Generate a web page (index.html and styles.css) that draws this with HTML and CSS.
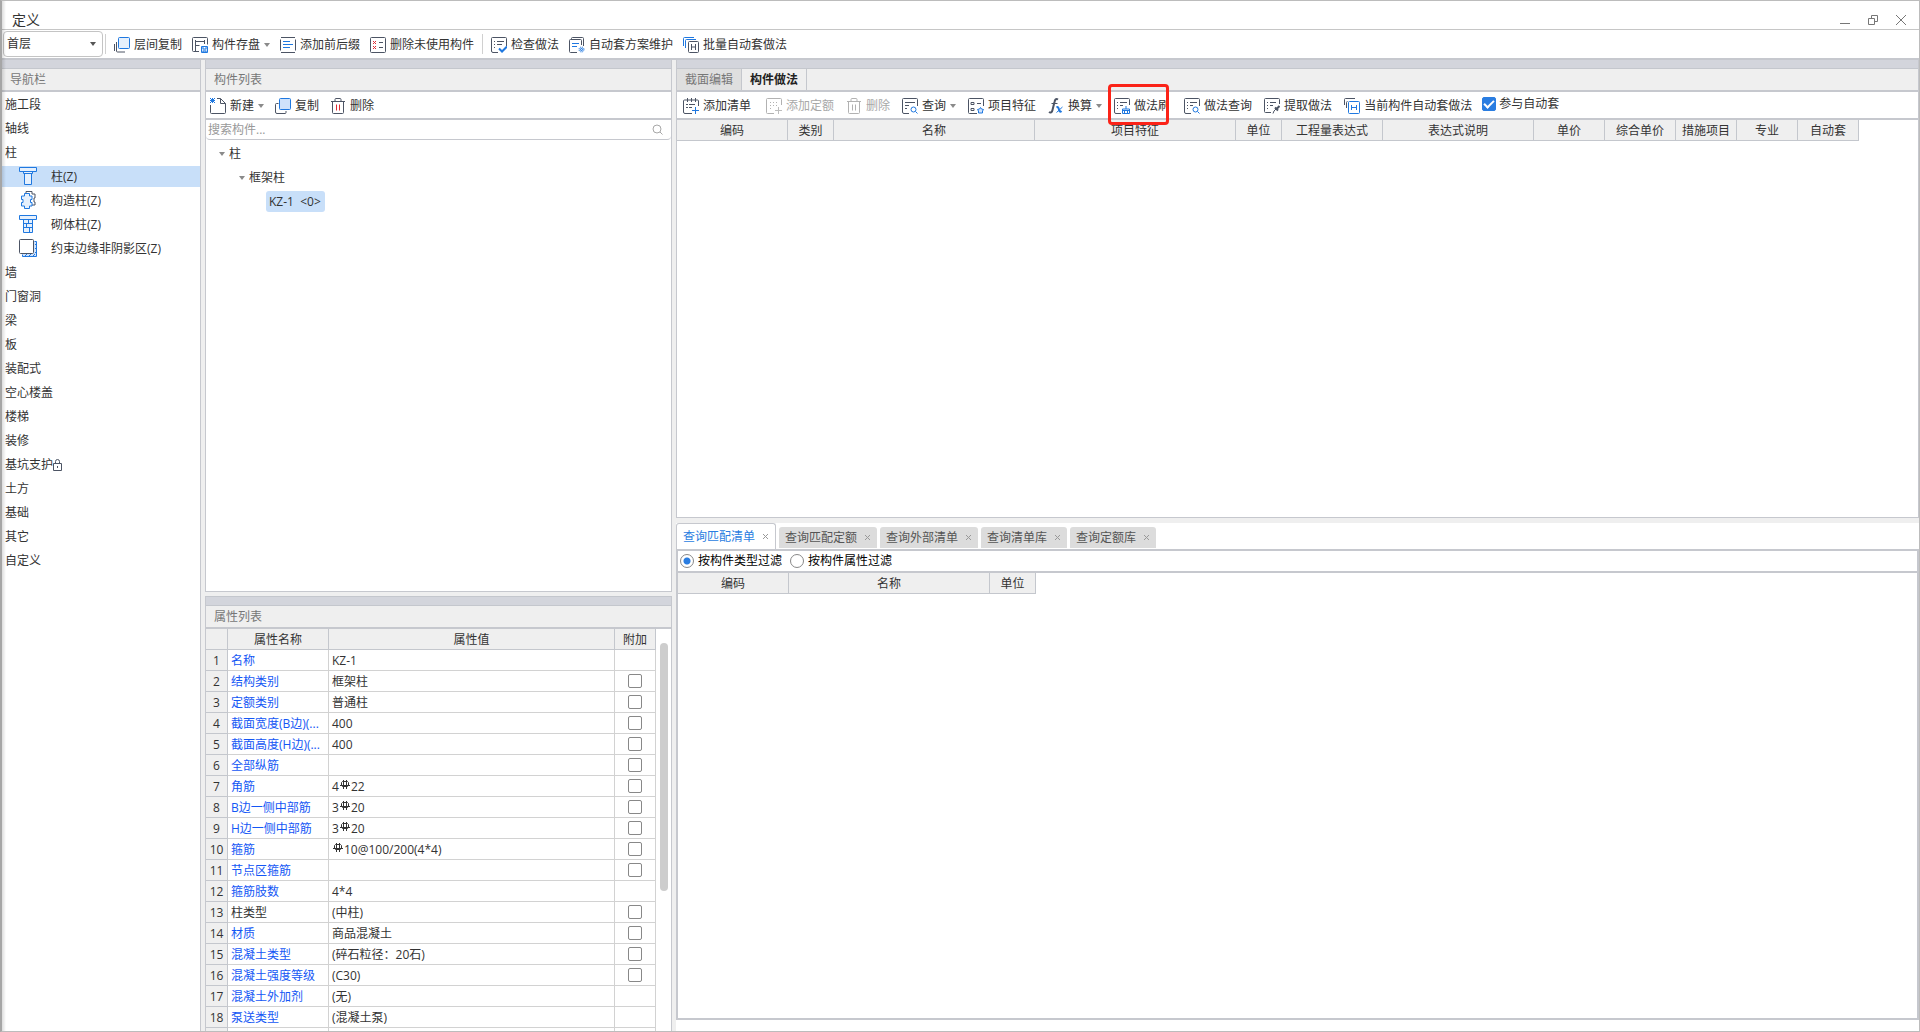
FILE: index.html
```html
<!DOCTYPE html>
<html lang="zh-CN">
<head>
<meta charset="utf-8">
<title>定义</title>
<link rel="stylesheet" href="styles.css">
</head>
<body>
<svg class="defs" aria-hidden="true">
  <symbol id="i-copy" viewBox="0 0 16 16"><path class="d" d="M3.500 5.500H1.500a1 1 0 0 0-1 1V14a1.500 1.500 0 0 0 1.500 1.500H10a1 1 0 0 0 1-1V13"/><rect class="b f" x="4.500" y=".5" width="11" height="11" rx="1"/></symbol>
  <symbol id="i-layers" viewBox="0 0 16 16"><path class="d" d="M.5 7v7M2.500 5v9a1 1 0 0 0 1 1H11"/><rect class="b f2" x="4.500" y=".5" width="11" height="11" rx="1"/></symbol>
  <symbol id="i-save" viewBox="0 0 16 16"><path class="d" d="M7 14.500H1.500a1 1 0 0 1-1-1v-12a1 1 0 0 1 1-1h13a1 1 0 0 1 1 1v6M3.500 3v11.500M3.500 4.500h9M12.500 3v4M3.500 8.500h4"/><path class="b f" d="M9.500 9.500h6v6h-6zM11 9.500v2.500h3V9.500M11 15.500V14h3v1.500"/></symbol>
  <symbol id="i-affix" viewBox="0 0 16 16"><path class="d" d="M.5 2.500v11M15.500 2.500v11"/><path class="d" d="M1 .5h14M1 15.500h14"/><path class="b" d="M3 4.500h7M3 7.500h10M3 10.500h7"/></symbol>
  <symbol id="i-unused" viewBox="0 0 16 16"><rect class="d" x=".5" y=".5" width="15" height="15" rx="1"/><path class="r" d="M3 4l3 3M6 4l-3 3M3 9l3 3M6 9l-3 3"/><path class="d" d="M9 5.500h4M9 10.500h4"/></symbol>
  <symbol id="i-check" viewBox="0 0 16 16"><path class="d" d="M15.500 9V1.500a1 1 0 0 0-1-1h-13a1 1 0 0 0-1 1v12.500a1.500 1.500 0 0 0 1.500 1.500H7M3 4.500h1M6 4.500h7M3 7.500h1M6 7.500h5M3 10.500h1"/><path class="b w" d="M8 11.500l3 3 5-5"/></symbol>
  <symbol id="i-plan" viewBox="0 0 16 16"><path class="d" d="M2.500 2.500v-1a1 1 0 0 1 1-1h10a1 1 0 0 1 1 1V9M8 15.500H1.500a1 1 0 0 1-1-1v-11a1 1 0 0 1 1-1h10a1 1 0 0 1 1 1V8"/><path class="b" d="M3 6.500h7M3 9.500h5"/><circle class="b f" cx="12.500" cy="12.500" r="2.500" stroke-dasharray="1 1"/><circle class="b" cx="12.500" cy="12.500" r="1"/></symbol>
  <symbol id="i-batch" viewBox="0 0 16 16"><path class="b" d="M.5 9V1.500a1 1 0 0 1 1-1H11M2.500 11V3.500a1 1 0 0 1 1-1H13"/><rect class="d" x="5.500" y="4.500" width="10" height="11" rx="1"/><path class="d" d="M8.500 7v6M12.500 7v6M8.500 10h4"/></symbol>
  <symbol id="i-current" viewBox="0 0 16 16"><path class="d" d="M.5 7V1.500a1 1 0 0 1 1-1H11M2.500 10V4.500a1 1 0 0 1 1-1"/><rect class="b" x="4.500" y="3.500" width="11" height="12" rx="1"/><path class="b" d="M7.500 7v5M12.500 7v5M7.500 9.500h5"/></symbol>
  <symbol id="i-new" viewBox="0 0 16 16"><path class="d" d="M.5 7v7.500a1 1 0 0 0 1 1h13a1 1 0 0 0 1-1V5.500L10.500.5H7M10.500.5v5h5"/><path class="b" d="M0 0l5 5M5 0L0 5M2.500 0v5M0 2.500h5"/></symbol>
  <symbol id="i-trash" viewBox="0 0 16 16"><path class="d" d="M1 3.500h14M5 3V1.500a1 1 0 0 1 1-1h4a1 1 0 0 1 1 1V3M2.500 3.500v11a1 1 0 0 0 1 1h9a1 1 0 0 0 1-1v-11"/><path class="r" d="M6.500 6.500v6M9.500 6.500v6"/></symbol>
  <symbol id="i-addlist" viewBox="0 0 16 16"><path class="d" d="M9 15.500H2A1.500 1.500 0 0 1 .5 14V3a1 1 0 0 1 1-1h13a1 1 0 0 1 1 1v5M4.500 0v4M8.500 0v4M12.500 0v4M3 6.500h2M6 6.500h6M3 9.500h2M6 9.500h3"/><path class="b" d="M9 12.500h7M12.500 9v7"/></symbol>
  <symbol id="i-addquota" viewBox="0 0 16 16"><path class="d" d="M8 15.500H1.500a1 1 0 0 1-1-1v-13a1 1 0 0 1 1-1h13a1 1 0 0 1 1 1V7M4 4.500h1M7 4.500h1M10 4.500h1M4 7.500h1M7 7.500h1M10 7.500h1M4 10.500h1"/><path class="b" d="M9 12.500h7M12.500 9v7"/></symbol>
  <symbol id="i-query" viewBox="0 0 16 16"><path class="d" d="M7 15.500H2A1.500 1.500 0 0 1 .5 14V1.500a1 1 0 0 1 1-1h13a1 1 0 0 1 1 1V8M3 4.500h10M3 7.500h4M3 10.500h2"/><circle class="b" cx="11.500" cy="11.500" r="2.500"/><path class="b" d="M13.500 13.500l2 2"/></symbol>
  <symbol id="i-mquery" viewBox="0 0 16 16"><path class="d" d="M7 15.500H2A1.500 1.500 0 0 1 .5 14V1.500a1 1 0 0 1 1-1h13a1 1 0 0 1 1 1V8M3 4.500h1M6 4.500h7M3 7.500h1M6 7.500h3M3 10.500h1"/><circle class="b" cx="11.500" cy="11.500" r="2.500"/><path class="b" d="M13.500 13.500l2 2"/></symbol>
  <symbol id="i-feature" viewBox="0 0 16 16"><path class="d" d="M9 15.500H1.500a1 1 0 0 1-1-1v-13a1 1 0 0 1 1-1h13a1 1 0 0 1 1 1V8M3 4.500h3v2H3zM3 10.500h3v2H3zM9 5.500h4"/><path class="b f" d="M12.500 9.500l1 1.500 2 .5-1 1.500v2h-4v-2l-1-1.500 2-.5z"/></symbol>
  <symbol id="i-fx" viewBox="0 0 16 16"><path class="d w" d="M10 1.500C8 .3 7 1.500 6.500 4L4.500 12c-.5 2.500-2 3-3.500 2"/><path class="d" d="M3.500 5.500h6"/><path class="b w" d="M8.500 9.500c1.500-1 2 0 2.500 2s1 3 2.500 1.500"/><path class="b" d="M14.500 9l-6 5.500"/></symbol>
  <symbol id="i-brush" viewBox="0 0 16 16"><path class="d" d="M7 15.500H2A1.500 1.500 0 0 1 .5 14V1.500a1 1 0 0 1 1-1h13a1 1 0 0 1 1 1V7M3 4.500h1M6 4.500h7M3 7.500h1M6 7.500h3M3 10.500h1"/><path class="b" d="M12 8v3M8.500 11h7v4.500h-7zM8.500 12.500h7M10.500 13v2.500M13.500 13v2.500"/></symbol>
  <symbol id="i-extract" viewBox="0 0 16 16"><path class="d" d="M7 14.500H1.500a1 1 0 0 1-1-1v-12a1 1 0 0 1 1-1h13a1 1 0 0 1 1 1V6M3 4.500h1M6 4.500h6M3 7.500h1M6 7.500h3M3 10.500h1M9 15.500l1-2.500 2.500-2.500"/><path class="d w" d="M11 9.500l3 3M12.500 11l3-3"/></symbol>
  <symbol id="n-col" viewBox="0 0 19 19"><path class="b f2" d="M.5.5h17v4h-17zM4.500 4.500h9v2h-9zM5.500 6.500h7v11h-7z"/></symbol>
  <symbol id="n-struct" viewBox="0 0 19 19"><path class="d" d="M7 2V.5h6V3h3v4h-1v4h1v3h-3"/><path class="b f2" d="M5.500 2.500h5V5h2.500v3.500h-1.500v3H13V15h-2.500v2.500h-5V15H2.500v-3.500H4v-3H2.500V5h3z"/></symbol>
  <symbol id="n-mason" viewBox="0 0 19 19"><path class="b f2" d="M.5.5h17v4h-17zM4.500 4.500h9v13h-9zM4.500 8.500h9M4.500 12.500h9M9.500 4.500v4M7.500 8.500v4M10.500 12.500v5"/></symbol>
  <symbol id="n-edge" viewBox="0 0 19 19"><path class="b f" d="M15.500 2.500h2v15h-14v-2M16 6l2-2M16 10l2-2M16 14l2-2M6 17l2-2M10 17l2-2M14 17l2-2"/><rect class="d wh" x=".5" y=".5" width="14" height="14" rx="1"/></symbol>
  <symbol id="i-lock" viewBox="0 0 10 12"><path class="d" d="M.5 4.500h8v7h-8zM2.500 4.500v-2a2 2 0 0 1 4 0v2M4.500 7v2"/></symbol>
  <symbol id="i-search" viewBox="0 0 12 12"><circle cx="5" cy="5" r="4" class="g"/><path class="g" d="M8 8l2.500 2.500"/></symbol>
  <symbol id="rebar" viewBox="0 0 10 10"><path d="M2.500 1.500h5l1 1v3l-1 1h-5l-1-1v-3zM3.500 0v9M6.500 0v9M0 5.500h10"/></symbol>
</svg>

<div class="window">
  <header class="titlebar">
    <h1>定义</h1>
    <div class="winbtns">
      <button aria-label="最小化"><svg viewBox="0 0 12 12"><path d="M1 9.500h10"/></svg></button>
      <button aria-label="还原"><svg viewBox="0 0 12 12"><path d="M1.500 4.500h6v6h-6zM4.500 4.500v-3h6v6h-3"/></svg></button>
      <button aria-label="关闭"><svg viewBox="0 0 12 12"><path d="M1 1l10 10M11 1L1 11"/></svg></button>
    </div>
  </header>

  <div class="toolbar main">
    <label class="floor"><select aria-label="楼层"><option>首层</option></select></label>
    <i class="sep"></i>
    <button><svg><use href="#i-layers"/></svg>层间复制</button>
    <button class="drop"><svg><use href="#i-save"/></svg>构件存盘</button>
    <button><svg><use href="#i-affix"/></svg>添加前后缀</button>
    <button><svg><use href="#i-unused"/></svg>删除未使用构件</button>
    <i class="sep"></i>
    <button><svg><use href="#i-check"/></svg>检查做法</button>
    <button><svg><use href="#i-plan"/></svg>自动套方案维护</button>
    <button><svg><use href="#i-batch"/></svg>批量自动套做法</button>
  </div>

  <main class="workspace">
    <nav class="panel nav">
      <div class="band"></div>
      <h2>导航栏</h2>
      <ul>
        <li><a href="#">施工段</a></li>
        <li><a href="#">轴线</a></li>
        <li><a href="#">柱</a></li>
        <li><a class="sub on" href="#"><svg><use href="#n-col"/></svg>柱(Z)</a></li>
        <li><a class="sub" href="#"><svg><use href="#n-struct"/></svg>构造柱(Z)</a></li>
        <li><a class="sub" href="#"><svg><use href="#n-mason"/></svg>砌体柱(Z)</a></li>
        <li><a class="sub" href="#"><svg><use href="#n-edge"/></svg>约束边缘非阴影区(Z)</a></li>
        <li><a href="#">墙</a></li>
        <li><a href="#">门窗洞</a></li>
        <li><a href="#">梁</a></li>
        <li><a href="#">板</a></li>
        <li><a href="#">装配式</a></li>
        <li><a href="#">空心楼盖</a></li>
        <li><a href="#">楼梯</a></li>
        <li><a href="#">装修</a></li>
        <li><a href="#">基坑支护<svg class="lock"><use href="#i-lock"/></svg></a></li>
        <li><a href="#">土方</a></li>
        <li><a href="#">基础</a></li>
        <li><a href="#">其它</a></li>
        <li><a href="#">自定义</a></li>
      </ul>
    </nav>

    <div class="middle">
      <section class="panel components">
        <div class="band"></div>
        <h2>构件列表</h2>
        <div class="toolbar list">
          <button class="drop"><svg><use href="#i-new"/></svg>新建</button>
          <button><svg><use href="#i-copy"/></svg>复制</button>
          <button><svg><use href="#i-trash"/></svg>删除</button>
        </div>
        <div class="search"><input type="text" placeholder="搜索构件..." aria-label="搜索构件"><svg><use href="#i-search"/></svg></div>
        <ul class="tree">
          <li class="l1"><span class="node open">柱</span></li>
          <li class="l2"><span class="node open">框架柱</span></li>
          <li class="l3"><span class="leaf">KZ-1&nbsp; &lt;0&gt;</span></li>
        </ul>
      </section>

      <section class="panel props">
        <div class="band"></div>
        <h2>属性列表</h2>
        <div class="propbody">
          <table class="grid">
            <colgroup><col class="c-no"><col class="c-name"><col><col class="c-add"></colgroup>
            <thead><tr><th></th><th>属性名称</th><th>属性值</th><th>附加</th></tr></thead>
            <tbody>
              <tr><th>1</th><td>名称</td><td>KZ-1</td><td></td></tr>
              <tr><th>2</th><td>结构类别</td><td>框架柱</td><td><input type="checkbox" aria-label="附加 结构类别"></td></tr>
              <tr><th>3</th><td>定额类别</td><td>普通柱</td><td><input type="checkbox" aria-label="附加 定额类别"></td></tr>
              <tr><th>4</th><td>截面宽度(B边)(...</td><td>400</td><td><input type="checkbox" aria-label="附加 截面宽度"></td></tr>
              <tr><th>5</th><td>截面高度(H边)(...</td><td>400</td><td><input type="checkbox" aria-label="附加 截面高度"></td></tr>
              <tr><th>6</th><td>全部纵筋</td><td></td><td><input type="checkbox" aria-label="附加 全部纵筋"></td></tr>
              <tr><th>7</th><td>角筋</td><td>4<svg class="rebar"><use href="#rebar"/></svg>22</td><td><input type="checkbox" aria-label="附加 角筋"></td></tr>
              <tr><th>8</th><td>B边一侧中部筋</td><td>3<svg class="rebar"><use href="#rebar"/></svg>20</td><td><input type="checkbox" aria-label="附加 B边一侧中部筋"></td></tr>
              <tr><th>9</th><td>H边一侧中部筋</td><td>3<svg class="rebar"><use href="#rebar"/></svg>20</td><td><input type="checkbox" aria-label="附加 H边一侧中部筋"></td></tr>
              <tr><th>10</th><td>箍筋</td><td><svg class="rebar"><use href="#rebar"/></svg>10@100/200(4*4)</td><td><input type="checkbox" aria-label="附加 箍筋"></td></tr>
              <tr><th>11</th><td>节点区箍筋</td><td></td><td><input type="checkbox" aria-label="附加 节点区箍筋"></td></tr>
              <tr><th>12</th><td>箍筋肢数</td><td>4*4</td><td></td></tr>
              <tr class="plain"><th>13</th><td>柱类型</td><td>(中柱)</td><td><input type="checkbox" aria-label="附加 柱类型"></td></tr>
              <tr><th>14</th><td>材质</td><td>商品混凝土</td><td><input type="checkbox" aria-label="附加 材质"></td></tr>
              <tr><th>15</th><td>混凝土类型</td><td>(碎石粒径：20石)</td><td><input type="checkbox" aria-label="附加 混凝土类型"></td></tr>
              <tr><th>16</th><td>混凝土强度等级</td><td>(C30)</td><td><input type="checkbox" aria-label="附加 混凝土强度等级"></td></tr>
              <tr><th>17</th><td>混凝土外加剂</td><td>(无)</td><td></td></tr>
              <tr><th>18</th><td>泵送类型</td><td>(混凝土泵)</td><td></td></tr>
              <tr><th></th><td></td><td></td><td></td></tr>
            </tbody>
          </table>
          <div class="scroll"><i></i></div>
        </div>
      </section>
    </div>

    <div class="right">
      <section class="panel method">
        <div class="band"></div>
        <div class="tabs"><button>截面编辑</button><button class="on">构件做法</button></div>
        <div class="toolbar ops">
          <button class="wide"><svg><use href="#i-addlist"/></svg>添加清单</button>
          <button disabled><svg><use href="#i-addquota"/></svg>添加定额</button>
          <button disabled><svg><use href="#i-trash"/></svg>删除</button>
          <button class="drop"><svg><use href="#i-query"/></svg>查询</button>
          <button><svg><use href="#i-feature"/></svg>项目特征</button>
          <button class="drop"><svg><use href="#i-fx"/></svg>换算</button>
          <button class="wide marked"><svg><use href="#i-brush"/></svg><span>做法刷</span></button>
          <button><svg><use href="#i-mquery"/></svg>做法查询</button>
          <button><svg><use href="#i-extract"/></svg>提取做法</button>
          <button><svg><use href="#i-current"/></svg>当前构件自动套做法</button>
          <label class="auto"><input type="checkbox" checked>参与自动套</label>
        </div>
        <table class="heads">
          <colgroup><col class="w111"><col class="w46"><col class="w201"><col class="w201"><col class="w46"><col class="w101"><col class="w151"><col class="w71"><col class="w71"><col class="w61"><col class="w61"><col class="w61"></colgroup>
          <thead><tr><th>编码</th><th>类别</th><th>名称</th><th>项目特征</th><th>单位</th><th>工程量表达式</th><th>表达式说明</th><th>单价</th><th>综合单价</th><th>措施项目</th><th>专业</th><th>自动套</th></tr></thead>
        </table>
      </section>

      <section class="query">
        <div class="qtabs">
          <div class="qtab on"><button>查询匹配清单</button><button class="x" aria-label="关闭"><svg viewBox="0 0 7 7"><path d="M1 1l5 5M6 1L1 6"/></svg></button></div>
          <div class="qtab"><button>查询匹配定额</button><button class="x" aria-label="关闭"><svg viewBox="0 0 7 7"><path d="M1 1l5 5M6 1L1 6"/></svg></button></div>
          <div class="qtab"><button>查询外部清单</button><button class="x" aria-label="关闭"><svg viewBox="0 0 7 7"><path d="M1 1l5 5M6 1L1 6"/></svg></button></div>
          <div class="qtab"><button>查询清单库</button><button class="x" aria-label="关闭"><svg viewBox="0 0 7 7"><path d="M1 1l5 5M6 1L1 6"/></svg></button></div>
          <div class="qtab"><button>查询定额库</button><button class="x" aria-label="关闭"><svg viewBox="0 0 7 7"><path d="M1 1l5 5M6 1L1 6"/></svg></button></div>
        </div>
        <div class="qbox">
          <div class="filters">
            <label><input type="radio" name="filter" checked>按构件类型过滤</label>
            <label><input type="radio" name="filter">按构件属性过滤</label>
          </div>
          <table class="heads">
            <colgroup><col class="w111"><col class="w201"><col class="w46"></colgroup>
            <thead><tr><th>编码</th><th>名称</th><th>单位</th></tr></thead>
          </table>
        </div>
      </section>
    </div>
  </main>
</div>
</body>
</html>
```
FILE: styles.css
```css
*, ::before, ::after { box-sizing: border-box; }

body {
  margin: 0;
  font: 12px/20px "Open Sans", "Noto Sans CJK SC", sans-serif;
  color: #333;
  background: #fff;
}

button, input, select { font: inherit; color: inherit; margin: 0; padding: 0; }
button { border: 0; background: none; white-space: nowrap; }
a { color: inherit; text-decoration: none; }
ul { list-style: none; margin: 0; padding: 0; }
h1, h2 { margin: 0; font-weight: 400; }

.defs { position: absolute; width: 0; height: 0; }
svg { flex: none; fill: none; }
.d { stroke: #4c5464; }
.b { stroke: #1f78e0; }
.r { stroke: #e02b33; }
.g { stroke: #a8a8a8; }
.f { fill: #cfe2fb; }
.f2 { fill: #e6f0fc; }
.wh { fill: #fff; }
.w { stroke-width: 2; }

/* window frame */
.window {
  position: relative;
  display: flex;
  flex-direction: column;
  height: 100vh;
  overflow: hidden;
  border: solid #bcbcbc;
  border-width: 1px 1px 1px 2px;
  border-left-color: #a6a6a6;
}
.window::before {
  content: "";
  position: absolute;
  inset: 0 auto 0 0;
  width: 4px;
  background: linear-gradient(to right, #0002, #0000);
  pointer-events: none;
}
.titlebar {
  display: flex;
  justify-content: space-between;
  align-items: center;
  height: 29px;
  padding: 10px 12px 0 10px;
  border-bottom: 1px solid #c6c6c6;
}
.titlebar h1 { font-size: 14px; line-height: 18px; }
.winbtns { display: flex; gap: 16px; }
.winbtns button, .winbtns svg { display: block; width: 12px; height: 12px; stroke: #777; }

/* toolbars */
.toolbar { display: flex; align-items: center; flex: none; }
.toolbar button { display: flex; align-items: center; gap: 4px; height: 24px; }
.toolbar svg { width: 16px; height: 16px; }
.drop::after, .floor::after, .open::before {
  content: "";
  width: 6px;
  border: 3px solid transparent;
  border-top: 4px solid #8a8a8a;
  border-bottom: 0;
}
.toolbar button:disabled { color: #a8a8a8; }
button:disabled svg { filter: grayscale(1) opacity(.45); }
.main { height: 30px; padding-left: 1px; gap: 10px; border-bottom: 2px solid #c6c8ce; }
.main button { height: 26px; padding-top: 2px; }
.sep { width: 1px; height: 20px; margin: 0 -2px; background: #d0d0d0; }
.floor {
  display: flex;
  align-items: center;
  width: 100px;
  height: 26px;
  margin-right: -6px;
  padding: 0 6px 0 3px;
  border: 1px solid #c4c4c4;
  border-radius: 4px;
}
.floor select { flex: 1; appearance: none; border: 0; background: none; }
.floor::after { border-top-color: #555; }

/* workspace */
.workspace {
  flex: 1;
  min-height: 0;
  display: grid;
  grid-template-columns: 199px 467px minmax(0, 1fr);
  gap: 4px;
  background: #efefef;
}
.panel {
  display: flex;
  flex-direction: column;
  min-height: 0;
  background: #fff;
  border-right: 1px solid #c6c8ce;
}
.band { flex: none; height: 9px; background: #d3d5dc; border-bottom: 1px solid #c4c7cd; }
h2, .tabs {
  flex: none;
  height: 23px;
  background: #efefef;
  border-bottom: 2px solid #c6c8ce;
}
h2 { padding-left: 8px; font-size: 12px; line-height: 22px; color: #777; }

.nav ul { padding-top: 2px; }
.nav li a { display: flex; align-items: center; height: 21px; margin-bottom: 3px; padding-left: 3px; }
.nav .sub { gap: 13px; padding-left: 17px; }
.nav .sub svg { width: 19px; height: 19px; }
.nav .on { background: #c8dff9; }
.nav .lock { width: 10px; height: 12px; }

.middle { display: flex; flex-direction: column; min-height: 0; gap: 4px; }
.middle .panel { border-left: 1px solid #c6c8ce; }
.components { flex: 1; border-bottom: 1px solid #c6c8ce; }
.list { height: 28px; padding: 2px 0 0 4px; gap: 11px; border-bottom: 2px solid #c6c8ce; }
.search { display: flex; align-items: center; height: 20px; padding-right: 7px; border-bottom: 1px solid #c6c8ce; border-radius: 4px; }
.search input { flex: 1; height: 18px; padding-left: 2px; border: 0; outline: 0; background: none; }
.search input::placeholder { color: #999; }
.search svg { width: 12px; height: 12px; }
.tree { padding-top: 3px; }
.tree li { display: flex; height: 21px; margin-bottom: 3px; line-height: 21px; }
.l1 { padding-left: 13px; }
.l2 { padding-left: 33px; }
.l3 { padding-left: 60px; }
.node { display: flex; align-items: center; gap: 4px; }
.leaf { padding: 0 4px 0 3px; background: #c8dff9; border-radius: 3px; }

/* property list */
.props { height: 435px; border-top: 1px solid #c4c7cd; }
.propbody { display: flex; flex: 1; min-height: 0; overflow: hidden; }
.grid { flex: 1; height: 0; table-layout: fixed; border-spacing: 0; }
.grid th, .grid td {
  height: 21px;
  padding: 2px 0 0 3px;
  line-height: 18px;
  font-weight: 400;
  border: solid #d2d2d2;
  border-width: 0 1px 1px 0;
  white-space: nowrap;
  overflow: hidden;
}
.grid th { padding: 2px 0 0; text-align: center; background: #efefef; border-color: #c4c7cd; }
.grid td:nth-child(2) { color: #1457f5; }
.grid .plain td:nth-child(2) { color: #333; }
.grid td:last-child { padding: 0; }
.grid input { display: block; margin: 0 auto; }
.c-no { width: 22px; }
.c-name { width: 101px; }
.c-add { width: 41px; }
.rebar { width: 10px; height: 10px; margin: 0 1px; vertical-align: 1px; stroke: #333; }
.scroll { width: 15px; padding: 14px 3px 0 4px; }
.scroll i { display: block; height: 248px; border-radius: 4px; background: #cdcdcd; }

input[type=checkbox] {
  appearance: none;
  display: grid;
  place-items: center;
  width: 14px;
  height: 14px;
  border: 1px solid #888;
  border-radius: 2px;
  background: #fff;
}
input[type=checkbox]:checked { background: #2a7de1; border-color: #2a7de1; }
input[type=checkbox]:checked::before {
  content: "";
  width: 10px;
  height: 6px;
  margin-top: -3px;
  border: solid #fff;
  border-width: 0 0 2px 2px;
  transform: rotate(-45deg);
}

/* right side */
.right { display: flex; flex-direction: column; min-width: 0; min-height: 0; gap: 5px; }
.method { flex: none; height: calc(47% + 2px); border: solid #c6c8ce; border-width: 0 1px 1px; }
.tabs { display: flex; }
.tabs button { width: 65px; color: #777; background: #dfdfdf; border-right: 1px solid #c4c7cd; }
.tabs .on { color: #222; font-weight: 700; background: #efefef; }
.ops { height: 28px; padding: 2px 0 0 6px; gap: 12px; border-bottom: 2px solid #c6c8ce; }
.ops .wide { margin-right: 3px; }
.marked { position: relative; }
.marked span { width: 35px; overflow: hidden; }
.marked::before {
  content: "";
  position: absolute;
  left: -6px;
  top: -10px;
  width: 61px;
  height: 41px;
  border: 3px solid #fb2318;
  border-radius: 4px;
}
.auto { display: flex; align-items: center; gap: 3px; margin-left: -2px; padding-bottom: 4px; }

.heads { align-self: flex-start; table-layout: fixed; width: 0; border-spacing: 0; }
.heads th {
  height: 21px;
  padding: 2px 0 0;
  font-weight: 400;
  line-height: 18px;
  background: #efefef;
  border: solid #c4c7cd;
  border-width: 0 1px 1px 0;
  white-space: nowrap;
}
.w46 { width: 46px; }
.w61 { width: 61px; }
.w71 { width: 71px; }
.w101 { width: 101px; }
.w111 { width: 111px; }
.w151 { width: 151px; }
.w201 { width: 201px; }

.query { display: flex; flex: 1; flex-direction: column; min-height: 0; padding-bottom: 11px; background: #fff; }
.qtabs { display: flex; align-items: flex-end; gap: 3px; height: 26px; }
.qtab {
  display: flex;
  align-items: center;
  gap: 7px;
  height: 21px;
  margin-bottom: 1px;
  padding: 0 6px;
  color: #555;
  background: #dcdcdc;
  border-radius: 3px 3px 0 0;
}
.qtab.on { height: 26px; margin-bottom: 0; color: #2a7de1; background: #fff; border: 1px solid #c6c8ce; border-bottom: 0; }
.x, .x svg { display: block; width: 7px; height: 7px; stroke: #999; }
.qbox { flex: 1; border: 2px solid #c6c8ce; }
.filters { display: flex; align-items: center; gap: 8px; height: 22px; padding-left: 2px; color: #000; border-bottom: 2px solid #c6c8ce; }
.filters label { display: flex; align-items: center; gap: 4px; }
input[type=radio] {
  appearance: none;
  width: 14px;
  height: 14px;
  border: 1px solid #888;
  border-radius: 50%;
}
input[type=radio]:checked { background: radial-gradient(circle, #2a7de1 3px, #fff 4px); }
```
